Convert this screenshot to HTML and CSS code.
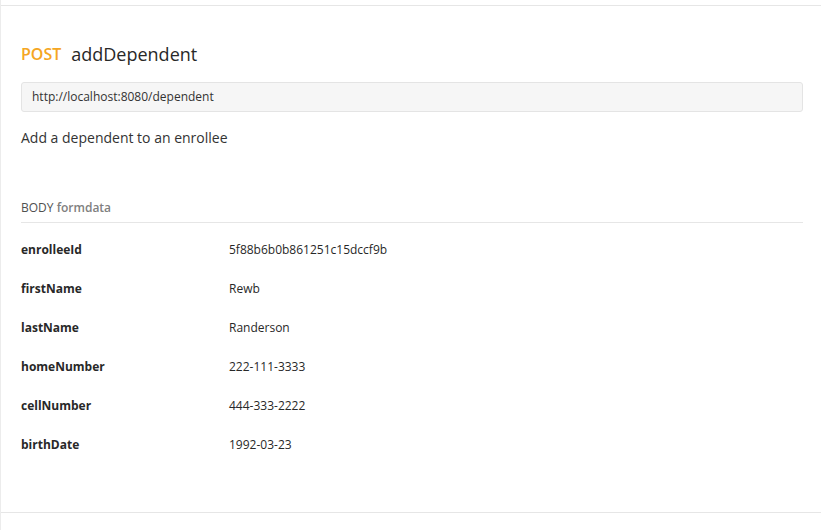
FILE: index.html
```html
<!DOCTYPE html>
<html>
<head>
<meta charset="utf-8">
<link rel="stylesheet" href="styles.css">
</head>
<body>
<div class="top-gap"></div>
<section class="request">
  <h2 class="title"><span class="method">POST</span><span class="name">addDependent</span></h2>
  <div class="url">http://localhost:8080/dependent</div>
  <p class="desc">Add a dependent to an enrollee</p>
  <div class="body-head">BODY <span class="mode">formdata</span></div>
  <div class="params">
    <div class="row"><div class="key">enrolleeId</div><div class="val">5f88b6b0b861251c15dccf9b</div></div>
    <div class="row"><div class="key">firstName</div><div class="val">Rewb</div></div>
    <div class="row"><div class="key">lastName</div><div class="val">Randerson</div></div>
    <div class="row"><div class="key">homeNumber</div><div class="val">222-111-3333</div></div>
    <div class="row"><div class="key">cellNumber</div><div class="val">444-333-2222</div></div>
    <div class="row"><div class="key">birthDate</div><div class="val">1992-03-23</div></div>
  </div>
</section>
<div class="next"></div>
</body>
</html>
```
FILE: styles.css
```css
html, body {
  margin: 0;
  padding: 0;
  background: #fff;
  font-family: "Open Sans", "Noto Sans", sans-serif;
  color: #333;
}
body {
  border-left: 1px solid #ececec;
  min-height: 530px;
  box-sizing: border-box;
}
.top-gap {
  height: 5px;
}
.request {
  border-top: 1px solid #e6e6e6;
  border-bottom: 1px solid #e6e6e6;
  padding: 36px 18px 0 20px;
  height: 508px;
  box-sizing: border-box;
}
.title {
  margin: 0;
  font-size: 18px;
  font-weight: 400;
  line-height: 24px;
  color: #282828;
  display: flex;
  gap: 10px;
}
.method {
  color: #f5a623;
  font-weight: 600;
  font-size: 16px;
}
.url {
  margin-top: 16px;
  height: 30px;
  box-sizing: border-box;
  background: #f6f6f6;
  border: 1px solid #e4e4e4;
  border-radius: 3px;
  padding: 0 10px;
  font-size: 12px;
  line-height: 28px;
  color: #333;
}
.desc {
  margin: 16px 0 0;
  font-size: 14px;
  line-height: 20px;
  color: #333;
}
.body-head {
  margin-top: 52px;
  font-size: 12px;
  line-height: 16px;
  padding-bottom: 6px;
  border-bottom: 1px solid #e6e6e6;
  color: #505050;
}
.mode {
  font-weight: 600;
  color: #808080;
}
.params {
  padding-top: 19px;
}
.row {
  display: grid;
  grid-template-columns: 208px 1fr;
  height: 39px;
  font-size: 12px;
  line-height: 16px;
}
.key {
  font-weight: 700;
  color: #282828;
}
.val {
  color: #282828;
}
```
